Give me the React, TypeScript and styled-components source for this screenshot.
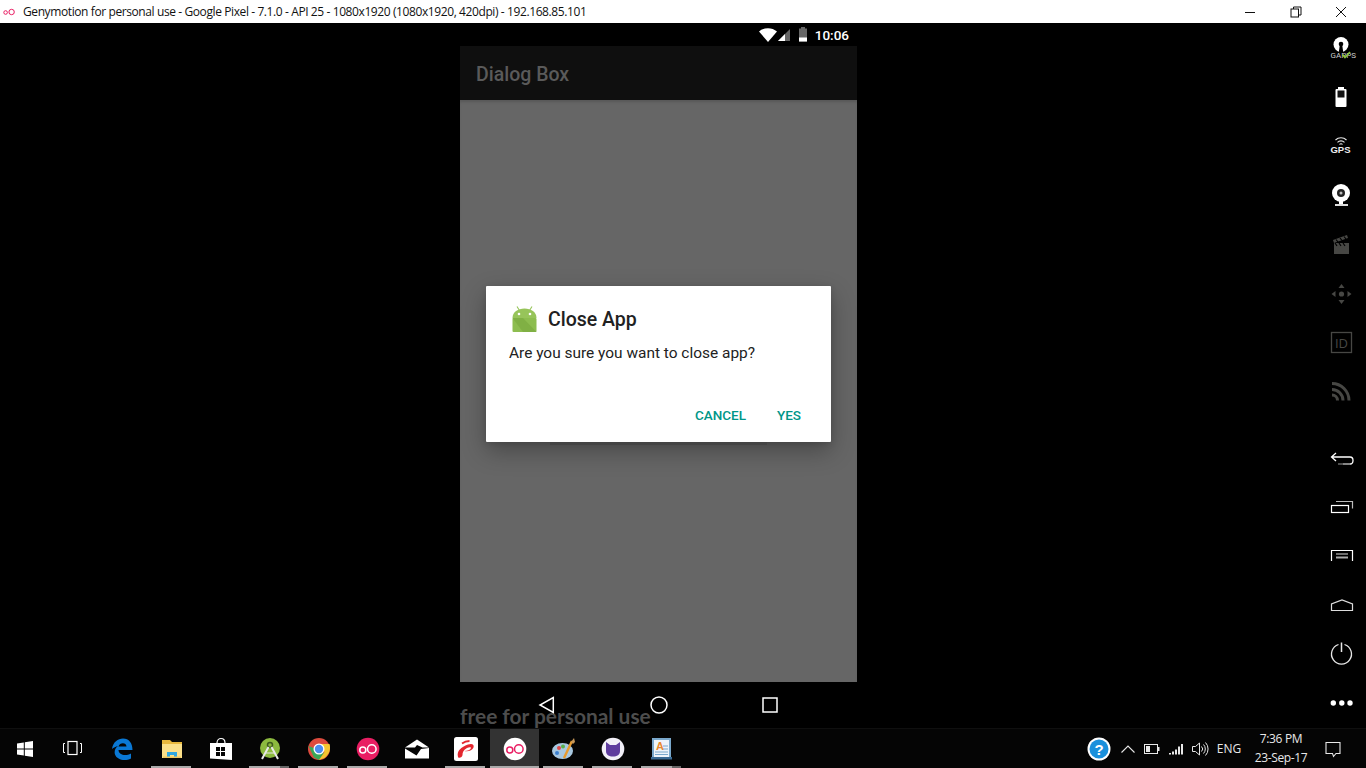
import { FC, ReactNode } from 'react'
import styled, { createGlobalStyle } from 'styled-components'

const GlobalStyle = createGlobalStyle`
  html, body {
    margin: 0;
    height: 100%;
    background: #000;
    overflow: hidden;
  }
  * { box-sizing: border-box; }
`

const Page = styled.div`
  display: flex;
  flex-direction: column;
  width: 1366px;
  height: 768px;
  background: #000;
`

const TitleBar = styled.div`
  display: flex;
  align-items: center;
  height: 23px;
  padding-left: 3px;
  background: #fff;
`

const TitleText = styled.span`
  margin-left: 8px;
  font: 12px 'Open Sans', 'Noto Sans', sans-serif;
  letter-spacing: -0.4px;
  color: #111;
  white-space: nowrap;
`

const WindowButtons = styled.div`
  display: flex;
  margin-left: auto;
  padding-right: 2px;
`

const WindowButton = styled.div`
  display: flex;
  align-items: center;
  justify-content: center;
  width: 45.5px;
  height: 21px;
`

const Main = styled.div`
  display: flex;
  flex: 1;
  min-height: 0;
  padding-left: 460px;
`

const Phone = styled.div`
  display: flex;
  flex-direction: column;
  width: 397px;
`

const StatusBar = styled.div`
  display: flex;
  align-items: center;
  justify-content: flex-end;
  height: 23px;
  padding-right: 8px;
  background: #000;
`

const Clock = styled.span`
  margin-left: 7px;
  font: 500 13.5px Roboto, sans-serif;
  color: #fff;
`

const AppBar = styled.div`
  display: flex;
  align-items: center;
  height: 54px;
  padding: 2px 0 0 16px;
  background: #0f0f0f;
  font: 500 19.5px Roboto, sans-serif;
  color: #5a5a5a;
`

const Content = styled.div`
  display: flex;
  justify-content: center;
  height: 582px;
  padding-top: 186px;
  background: #666;
  box-shadow: inset 0 3px 3px -1px rgba(0, 0, 0, 0.14);
`

const Dialog = styled.div`
  position: relative;
  display: flex;
  flex-direction: column;
  width: 345px;
  height: 156px;
  padding: 19px 0 0 23px;
  border-radius: 1px;
  background: #fff;
  box-shadow: 0 9px 24px rgba(0, 0, 0, 0.3), 0 2px 6px rgba(0, 0, 0, 0.12);
`

const BehindStrip = styled.div`
  position: absolute;
  left: 64px;
  bottom: -3px;
  width: 217px;
  height: 3px;
  background: #444;
`

const DialogHead = styled.div`
  display: flex;
  align-items: center;
  gap: 10px;
  padding-left: 2px;
  height: 27px;
`

const DialogTitle = styled.span`
  padding-top: 2px;
  font: 500 19.5px Roboto, sans-serif;
  color: #212121;
`

const DialogBody = styled.div`
  margin-top: 9px;
  font: 400 15.45px/24px Roboto, sans-serif;
  color: #222;
`

const DialogActions = styled.div`
  display: flex;
  justify-content: flex-end;
  gap: 31px;
  margin-top: auto;
  padding: 0 30px 19px 0;
`

const DialogAction = styled.span`
  font: 500 13.5px/16px Roboto, sans-serif;
  color: #009688;
`

const NavBar = styled.div`
  position: relative;
  display: flex;
  justify-content: center;
  flex: 1;
  padding-top: 13px;
`

const NavSlot = styled.div`
  position: relative;
  display: flex;
  justify-content: center;
  width: 111.5px;
  height: 20px;
`

const Watermark = styled.span`
  position: absolute;
  left: 0;
  top: 21px;
  font: 700 20.9px Lato, sans-serif;
  color: #4d4d4d;
  white-space: nowrap;
`

const SideBar = styled.div`
  display: flex;
  flex-direction: column;
  width: 50px;
  margin-left: auto;
  padding-top: 1px;
`

const SideItem = styled.div<{ $gap?: number }>`
  display: flex;
  align-items: center;
  justify-content: center;
  height: 49px;
  margin-top: ${({ $gap }) => $gap ?? 0}px;
`

const TaskBar = styled.div`
  position: relative;
  display: flex;
  flex: none;
  align-items: stretch;
  height: 40px;
  border-top: 1px solid #0f0f0f;
  background: #050505;
`

const TaskSlot = styled.div<{ $active?: boolean; $open?: boolean; $stacked?: boolean }>`
  position: relative;
  display: flex;
  align-items: center;
  justify-content: center;
  width: 49px;
  background: ${({ $active }) => ($active ? '#333' : 'transparent')};

  &::after {
    content: '';
    display: ${({ $open }) => ($open ? 'block' : 'none')};
    position: absolute;
    left: ${({ $active }) => ($active ? 0 : 4)}px;
    right: ${({ $active }) => ($active ? 0 : 5)}px;
    bottom: 0;
    height: 2px;
    background: ${({ $stacked }) =>
      $stacked ? 'linear-gradient(to right, #aaa 77%, #666 77%)' : '#aaa'};
  }
`

const Tray = styled.div`
  display: flex;
  align-items: center;
  margin-left: auto;
  padding-right: 16px;
  color: #fff;
`

const TrayIcon = styled.div<{ $width: number }>`
  display: flex;
  align-items: center;
  justify-content: center;
  width: ${({ $width }) => $width}px;
`

const TrayText = styled.span`
  font: 12px 'Open Sans', 'Noto Sans', sans-serif;
  color: #e8e8e8;
`

const TrayClock = styled.div`
  display: flex;
  flex-direction: column;
  align-items: center;
  gap: 3px;
  width: 70px;
  font: 12px/16px 'Open Sans', 'Noto Sans', sans-serif;
  letter-spacing: -0.35px;
  color: #e8e8e8;
`

const Svg: FC<{ size?: number; h?: number; children: ReactNode }> = ({ size = 32, h, children }) => (
  <svg width={size} height={h ?? size} viewBox={`0 0 ${size} ${h ?? size}`} style={{ display: 'block' }}>
    {children}
  </svg>
)

const DIM = '#474744'

const sideIcons: { key: string; gap?: number; icon: ReactNode }[] = [
  {
    key: 'gapps',
    icon: (
      <Svg>
        <circle cx="16" cy="11.500" r="7.500" fill="#fff" />
        <circle cx="16" cy="11" r="2.300" fill="#000" />
        <path d="M14.800 12h2.400l1 7h-4.400z" fill="#000" />
        <text x="5.500" y="25" fontFamily="Roboto, sans-serif" fontSize="8" fill="#ccc">GAPPS</text>
        <path d="M17.500 21.500l2.500 3 5-5.500" fill="none" stroke="#8cc63f" strokeWidth="1.800" />
      </Svg>
    ),
  },
  {
    key: 'battery',
    icon: (
      <Svg>
        <rect x="13" y="5" width="6" height="2" fill="#fff" />
        <rect x="10.500" y="7" width="11" height="18" rx="1" fill="#fff" />
        <rect x="12.500" y="8.500" width="7" height="7" fill="#111" />
      </Svg>
    ),
  },
  {
    key: 'gps',
    icon: (
      <Svg>
        <path d="M10.500 9a8 8 0 0 1 11 0M12.500 11.300a5 5 0 0 1 7 0M14.500 13.500a2 2 0 0 1 3 0" fill="none" stroke="#e8e8e8" strokeWidth="1.100" />
        <text x="15.500" y="22" textAnchor="middle" fontFamily="'Liberation Sans', sans-serif" fontWeight="700" fontSize="9.500" fill="#eee">GPS</text>
      </Svg>
    ),
  },
  {
    key: 'webcam',
    icon: (
      <Svg>
        <circle cx="16" cy="13" r="9" fill="#fff" />
        <circle cx="16" cy="13" r="4" fill="#222" />
        <circle cx="16" cy="13" r="1.500" fill="#bbb" />
        <rect x="14" y="21" width="4" height="3" fill="#fff" />
        <rect x="10" y="24" width="13" height="2" fill="#ddd" />
      </Svg>
    ),
  },
  {
    key: 'clapper',
    icon: (
      <Svg>
        <rect x="9" y="14" width="15" height="11" fill={DIM} />
        <path d="M8 11l14-5 1 3-14 5z" fill={DIM} />
        <path d="M11 10.500l2 2.500M15 9l2 2.500M19 7.500l2 2.500" stroke="#000" strokeWidth="1.200" />
        <path d="M10 14l2 3M14 14l2 3M18 14l2 3" stroke="#000" strokeWidth="1.200" />
      </Svg>
    ),
  },
  {
    key: 'dpad',
    icon: (
      <Svg>
        <circle cx="16.500" cy="16" r="2.600" fill={DIM} />
        <path d="M16.500 6l3 4h-6zM16.500 26l3-4h-6zM6.500 16l4-3v6zM26.500 16l-4-3v6z" fill={DIM} />
      </Svg>
    ),
  },
  {
    key: 'id',
    icon: (
      <Svg>
        <rect x="6.500" y="5.500" width="20" height="20" fill="none" stroke={DIM} strokeWidth="1.300" />
        <text x="16.500" y="20.500" textAnchor="middle" fontFamily="'Open Sans', sans-serif" fontSize="13" fill={DIM}>ID</text>
      </Svg>
    ),
  },
  {
    key: 'rss',
    icon: (
      <Svg>
        <path d="M7 7.500a17 17 0 0 1 17 17M7 13.500a11 11 0 0 1 11 11M7 19a5.500 5.500 0 0 1 5.500 5.500" fill="none" stroke={DIM} strokeWidth="3" />
      </Svg>
    ),
  },
  {
    key: 'back',
    gap: 17.5,
    icon: (
      <Svg>
        <path d="M11 11l-4.500 4 4.500 4M7 15h18q3 0 3 3.500t-3 3.500" fill="none" stroke="#fff" strokeWidth="1.300" />
        <path d="M13 22h5" stroke="#777" strokeWidth="1.300" />
        <path d="M18 22h7" stroke="#ccc" strokeWidth="1.300" />
      </Svg>
    ),
  },
  {
    key: 'recent',
    icon: (
      <Svg>
        <rect x="6.500" y="14.500" width="17" height="7" fill="none" stroke="#fff" strokeWidth="1.200" />
        <path d="M11 10.500h16.500v7" fill="none" stroke="#bbb" strokeWidth="1.200" />
      </Svg>
    ),
  },
  {
    key: 'menu',
    icon: (
      <Svg>
        <path d="M6.500 21V10.500h21V21" fill="none" stroke="#fff" strokeWidth="1.200" />
        <path d="M11 14h12" stroke="#ddd" strokeWidth="1" />
        <path d="M11 17.500h12" stroke="#aaa" strokeWidth="2" />
      </Svg>
    ),
  },
  {
    key: 'home',
    icon: (
      <Svg>
        <path d="M6.500 15v6.500h21V15L17 11z" fill="none" stroke="#ddd" strokeWidth="1.200" />
      </Svg>
    ),
  },
  {
    key: 'power',
    icon: (
      <Svg>
        <path d="M13.500 6.500a10 10 0 1 0 6 0" fill="none" stroke="#e8e8e8" strokeWidth="1.300" />
        <path d="M16.500 4.500v9.500" stroke="#e8e8e8" strokeWidth="1.500" />
      </Svg>
    ),
  },
  {
    key: 'more',
    icon: (
      <Svg>
        <circle cx="8.300" cy="16" r="2.700" fill="#fff" />
        <circle cx="16.800" cy="16" r="2.700" fill="#fff" />
        <circle cx="25" cy="16" r="2.700" fill="#fff" />
      </Svg>
    ),
  },
]

const GenyIcon: FC<{ bg: string; fg: string }> = ({ bg, fg }) => (
  <Svg size={24}>
    <circle cx="12" cy="12" r="11.300" fill={bg} />
    <circle cx="6.800" cy="13" r="3" fill="none" stroke={fg} strokeWidth="1.500" />
    <circle cx="15.800" cy="12" r="4.300" fill="none" stroke={fg} strokeWidth="1.500" />
  </Svg>
)

const taskItems: { key: string; open?: boolean; active?: boolean; stacked?: boolean; icon: ReactNode }[] = [
  {
    key: 'start',
    icon: (
      <Svg size={18}>
        <path d="M1 3.500l6.800-1v6H1zM8.800 2.300L17 1v7.500H8.800zM1 9.500h6.800v6l-6.800-1zM8.800 9.500H17V17l-8.200-1.200z" fill="#fff" />
      </Svg>
    ),
  },
  {
    key: 'taskview',
    icon: (
      <Svg size={22}>
        <rect x="5" y="3.500" width="9" height="13" fill="none" stroke="#fff" strokeWidth="1.200" />
        <path d="M2 5.500H0.500v9H2M17 5.500h1.500v9H17" fill="none" stroke="#fff" strokeWidth="1" />
      </Svg>
    ),
  },
  {
    key: 'edge',
    icon: (
      <Svg size={24}>
        <path d="M1 12C2 5 7 1.500 12 1.500c6 0 9.500 4.500 9.500 11.500H7.500c.3 5 7 6.500 12.500 3.500v5c-6 3-14 1.500-16-4-1-3 0-6.500 3-8.500-2 .5-4.500 1.500-6 3zM7.500 9.500h8c0-4.500-7-4.500-8 0z" fill="#0a78d4" fillRule="evenodd" />
      </Svg>
    ),
  },
  {
    key: 'explorer',
    open: true,
    icon: (
      <Svg size={24}>
        <path d="M2 3h8l2 2h10v4H2z" fill="#e8b83e" />
        <rect x="2" y="7" width="20" height="14" fill="#fbe08a" />
        <path d="M7 21v-6h10v6h-3v-3h-4v3z" fill="#2fa7e0" />
        <rect x="3" y="19.500" width="18" height="1.500" fill="#f0c860" />
      </Svg>
    ),
  },
  {
    key: 'store',
    icon: (
      <Svg size={24}>
        <path d="M8 6c0-6 8-6 8 0" fill="none" stroke="#fff" strokeWidth="1.200" />
        <path d="M1 6h22v17l-22-1.500z" fill="#fff" />
        <path d="M7 10h4v4H7zM12 10h4v4h-4zM7 15h4v4H7zM12 15h4v4h-4z" fill="#050505" />
      </Svg>
    ),
  },
  {
    key: 'studio',
    open: true,
    stacked: true,
    icon: (
      <Svg size={24}>
        <circle cx="12" cy="11" r="10" fill="#8cba3f" />
        <circle cx="12" cy="8" r="2.500" fill="none" stroke="#3d5a1c" strokeWidth="1.500" />
        <path d="M10.500 10L4 22M13.500 10L20 22" stroke="#e8e8e8" strokeWidth="2" />
        <path d="M7 16h10" stroke="#e8e8e8" strokeWidth="1" />
      </Svg>
    ),
  },
  {
    key: 'chrome',
    open: true,
    icon: (
      <Svg size={24}>
        <circle cx="12" cy="12" r="11" fill="#dd4b3e" />
        <path d="M1.500 9L7 20.500l5 2.500h0L17 16l-5-3z" fill="#3aa757" />
        <path d="M12 7h10.500c1.500 5 0 10-5 14L12 23l5.500-8z" fill="#f5c630" />
        <circle cx="12" cy="12" r="5.500" fill="#fff" />
        <circle cx="12" cy="12" r="4.200" fill="#4a8df0" />
      </Svg>
    ),
  },
  { key: 'geny', open: true, icon: <GenyIcon bg="#e91e63" fg="#fff" /> },
  {
    key: 'mail',
    icon: (
      <Svg size={26}>
        <path d="M1 11.500L13 3.500l12 8h-6.500l-5.500-2.500-2 2.500z" fill="#fff" />
        <path d="M1 12.500l11.500 7 4.500-6.500 8-1v10.500H1z" fill="#fff" />
      </Svg>
    ),
  },
  {
    key: 'airtel',
    open: true,
    icon: (
      <Svg size={24}>
        <rect width="24" height="24" rx="2.500" fill="#fff" />
        <path d="M4 20c-1.500-6 3-10 10-12.500 4-1.500 6.500 0 5.500 3-1 2.500-5 4.500-9 3.500 3 0 6-1 6.500-3 .2-1-2-1-4 0-3.500 2-4.500 4-4.500 7 0 2-3.500 4-4.500 2z" fill="#e3262e" />
        <path d="M8 6.500c2-1.500 5-2.500 7.500-2.500" fill="none" stroke="#e3262e" strokeWidth="1.800" />
      </Svg>
    ),
  },
  { key: 'geny-active', open: true, active: true, icon: <GenyIcon bg="#fff" fg="#e91e63" /> },
  {
    key: 'paint',
    open: true,
    icon: (
      <Svg size={24}>
        <ellipse cx="10.500" cy="14" rx="10.500" ry="8" fill="#a8c8e0" />
        <circle cx="7" cy="11" r="2" fill="#e04a4a" />
        <circle cx="11" cy="9.500" r="2" fill="#5ab04a" />
        <circle cx="5" cy="16" r="2" fill="#3a80d0" />
        <path d="M12 21L20 4" stroke="#e89a2c" strokeWidth="2.400" />
        <path d="M19 5l3-4 1 4-2 2z" fill="#c89858" />
      </Svg>
    ),
  },
  {
    key: 'cat',
    open: true,
    icon: (
      <Svg size={24}>
        <circle cx="12" cy="12" r="11.300" fill="#f2f0f8" />
        <path d="M5 5l4 3h6l4-3v9c0 4-3 5.500-7 5.500S5 18 5 14z" fill="#5e3c9e" />
      </Svg>
    ),
  },
  {
    key: 'wordpad',
    open: true,
    stacked: true,
    icon: (
      <Svg size={24}>
        <rect x="2" y="1" width="19" height="21" fill="#7aa8cc" />
        <rect x="4" y="3" width="15" height="17" fill="#eef4fa" />
        <text x="6" y="13" fontFamily="'Liberation Sans', sans-serif" fontWeight="700" fontSize="11" fill="#e8872c">A</text>
        <path d="M13 9h5M13 12h5M5 15h13M5 17.500h13" stroke="#7aa8cc" strokeWidth="1" />
        <rect x="1" y="20" width="21" height="2.500" fill="#3a6a94" />
      </Svg>
    ),
  },
]

export default function App() {
  return (
    <Page>
      <GlobalStyle />
      <TitleBar>
        <Svg size={12}>
          <circle cx="2.600" cy="6.500" r="1.800" fill="none" stroke="#e91e63" strokeWidth="1" />
          <circle cx="8.600" cy="6" r="2.700" fill="none" stroke="#e91e63" strokeWidth="1" />
        </Svg>
        <TitleText>Genymotion for personal use - Google Pixel - 7.1.0 - API 25 - 1080x1920 (1080x1920, 420dpi) - 192.168.85.101</TitleText>
        <WindowButtons>
          <WindowButton>
            <Svg size={12}>
              <path d="M1 6.500h10" stroke="#111" strokeWidth="1" />
            </Svg>
          </WindowButton>
          <WindowButton>
            <Svg size={12}>
              <rect x="1" y="3" width="7.500" height="8" fill="none" stroke="#111" strokeWidth="1" />
              <path d="M3.500 3V1h7.500v8H8.500" fill="none" stroke="#111" strokeWidth="1" />
            </Svg>
          </WindowButton>
          <WindowButton>
            <Svg size={12}>
              <path d="M1 1l10 10M11 1L1 11" stroke="#111" strokeWidth="1" />
            </Svg>
          </WindowButton>
        </WindowButtons>
      </TitleBar>

      <Main>
        <Phone>
          <StatusBar>
            <Svg size={18} h={14}>
              <path d="M0 3.500C5-1 13-1 18 3.500L9 14z" fill="#fff" />
            </Svg>
            <Svg size={14} h={14}>
              <path d="M1 13L13 1v12z" fill="#666" />
              <path d="M1 13l7-7v7z" fill="#fff" />
            </Svg>
            <div style={{ width: 7 }} />
            <Svg size={10} h={15}>
              <rect x="3" y="0" width="4" height="2" fill="#666" />
              <rect x="1" y="1.500" width="8" height="13" fill="#666" />
              <rect x="1" y="10.500" width="8" height="4" fill="#fff" />
            </Svg>
            <Clock>10:06</Clock>
          </StatusBar>
          <AppBar>Dialog Box</AppBar>
          <Content>
            <Dialog>
              <BehindStrip />
              <DialogHead>
                <Svg size={27}>
                  <path d="M6 1.500L8.500 5.500M21 1.500L18.500 5.500" stroke="#97c45a" strokeWidth="1.100" />
                  <path d="M1.500 13C1.500 7 7 3.500 13.500 3.500S25.500 7 25.500 13z" fill="#97c45a" />
                  <rect x="1.500" y="13" width="24" height="14" rx="1" fill="#8dbd4f" />
                  <path d="M1.500 13H12l13.500 14H12z" fill="#80b044" />
                  <circle cx="8" cy="9" r="1.300" fill="#fff" />
                  <circle cx="19" cy="9" r="1.300" fill="#fff" />
                </Svg>
                <DialogTitle>Close App</DialogTitle>
              </DialogHead>
              <DialogBody>Are you sure you want to close app?</DialogBody>
              <DialogActions>
                <DialogAction>CANCEL</DialogAction>
                <DialogAction>YES</DialogAction>
              </DialogActions>
            </Dialog>
          </Content>
          <NavBar>
            <Watermark>free for personal use</Watermark>
            <NavSlot>
              <Svg size={18} h={20}>
                <path d="M15.300 2.500v15L2 10z" fill="none" stroke="#fff" strokeWidth="1.500" />
              </Svg>
            </NavSlot>
            <NavSlot>
              <Svg size={20}>
                <circle cx="10" cy="10" r="8" fill="none" stroke="#fff" strokeWidth="1.500" />
              </Svg>
            </NavSlot>
            <NavSlot>
              <Svg size={20}>
                <rect x="3" y="3" width="14" height="14" fill="none" stroke="#fff" strokeWidth="1.500" />
              </Svg>
            </NavSlot>
          </NavBar>
        </Phone>
        <SideBar>
          {sideIcons.map(({ key, gap, icon }) => (
            <SideItem key={key} $gap={gap}>
              {icon}
            </SideItem>
          ))}
        </SideBar>
      </Main>

      <TaskBar>
        {taskItems.map(({ key, open, active, stacked, icon }) => (
          <TaskSlot key={key} $open={open} $active={active} $stacked={stacked}>
            {icon}
          </TaskSlot>
        ))}
        <Tray>
          <TrayIcon $width={34}>
            <Svg size={24}>
              <circle cx="12" cy="12" r="11.500" fill="#fff" />
              <circle cx="12" cy="12" r="9.500" fill="#1a90dc" />
              <text x="12" y="17.500" textAnchor="middle" fontFamily="'Liberation Sans', sans-serif" fontWeight="700" fontSize="15" fill="#fff">?</text>
            </Svg>
          </TrayIcon>
          <TrayIcon $width={24}>
            <Svg size={16}>
              <path d="M1.500 11.500L8 5l6.500 6.500" fill="none" stroke="#e8e8e8" strokeWidth="1.100" />
            </Svg>
          </TrayIcon>
          <TrayIcon $width={24}>
            <Svg size={16} h={12}>
              <rect x="0.500" y="1.500" width="13" height="9" fill="none" stroke="#e8e8e8" strokeWidth="1" />
              <rect x="2" y="3" width="4" height="6" fill="#e8e8e8" />
              <rect x="14" y="4" width="1.500" height="4" fill="#e8e8e8" />
            </Svg>
          </TrayIcon>
          <TrayIcon $width={24}>
            <Svg size={16} h={12}>
              <path d="M1 10h2v1.500H1zM4 8.500h2v3H4zM7 6.500h2v5H7zM10 3.500h2v8h-2zM13 1h2v10.500h-2z" fill="#e8e8e8" />
            </Svg>
          </TrayIcon>
          <TrayIcon $width={24}>
            <Svg size={18} h={16}>
              <path d="M1.500 5.500h3l4-3.500v12l-4-3.500h-3z" fill="none" stroke="#e8e8e8" strokeWidth="1" />
              <path d="M10.500 5.500a3.500 3.500 0 0 1 0 5M12.500 3.500a6.500 6.500 0 0 1 0 9M14.500 1.500a9.500 9.500 0 0 1 0 13" fill="none" stroke="#e8e8e8" strokeWidth="1" />
            </Svg>
          </TrayIcon>
          <TrayIcon $width={34}>
            <TrayText>ENG</TrayText>
          </TrayIcon>
          <TrayClock>
            <span>7:36 PM</span>
            <span>23-Sep-17</span>
          </TrayClock>
          <TrayIcon $width={34}>
            <Svg size={18}>
              <path d="M2 2.500h14v11h-4l-2.500 3-1-3H2z" fill="none" stroke="#e8e8e8" strokeWidth="1.100" />
            </Svg>
          </TrayIcon>
        </Tray>
      </TaskBar>
    </Page>
  )
}
